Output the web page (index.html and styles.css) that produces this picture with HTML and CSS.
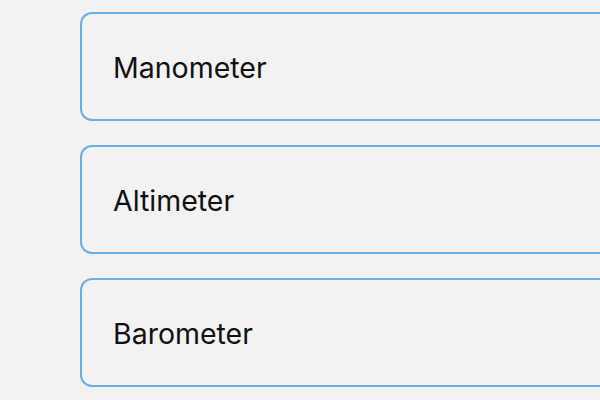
FILE: index.html
```html
<!DOCTYPE html>
<html lang="en">
<head>
    <meta charset="UTF-8">
    <title>Instruments</title>
    <link rel="stylesheet" href="styles.css">
</head>
<body>

<ul class="list">
    <li class="item">Manometer</li>
    <li class="item">Altimeter</li>
    <li class="item">Barometer</li>
</ul>

</body>
</html>
```

FILE: styles.css
```css
* {
    margin: 0;
    padding: 0;
    box-sizing: border-box;
}

ul, li {
    list-style: none;
}

html, body {
    height: 100%;
}

body {
    background: #f2f2f2;
    font-family: Inter, "Noto Sans", sans-serif;
    color: #111;
    overflow: hidden;
}

.list {
    display: flex;
    flex-direction: column;
    gap: 24px;
    padding: 12px 0 0 80px;
}

.item {
    display: flex;
    align-items: center;
    height: 109px;
    padding: 2px 0 0 31px;
    border: 2px solid #6aaee8;
    border-right: none;
    border-radius: 12px 0 0 12px;
    font-size: 28.5px;
}
```
